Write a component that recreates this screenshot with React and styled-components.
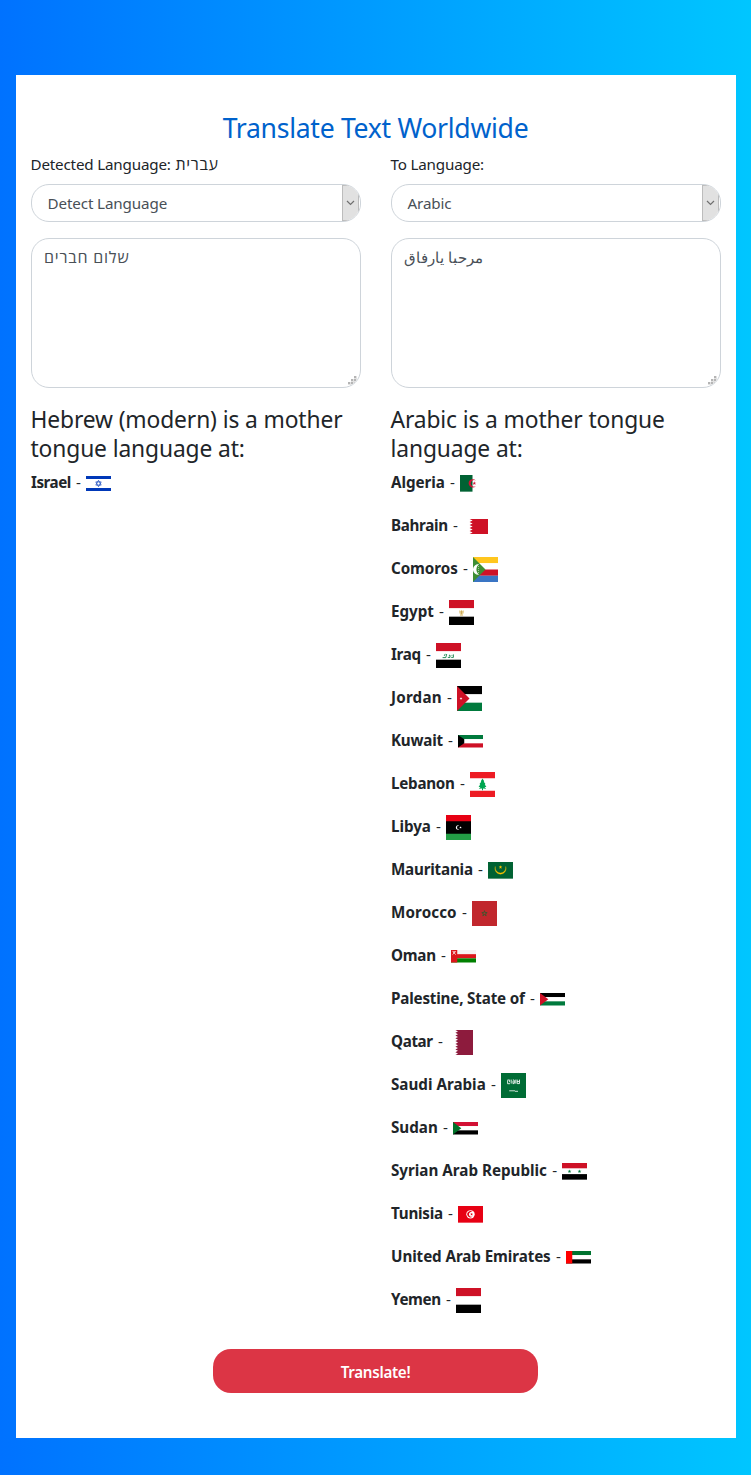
import React from 'react';
import styled, { createGlobalStyle } from 'styled-components';

const GlobalStyle = createGlobalStyle`
  *, *::before, *::after { box-sizing: border-box; }
  body {
    margin: 0;
    font-family: "Noto Sans", "Open Sans", sans-serif;
    font-size: 15.2px;
    line-height: 24px;
    letter-spacing: -0.18px;
    color: #212529;
    background: #0072ff;
  }
`;

const Page = styled.div`
  min-height: 1475px;
  padding: 75px 15px 37px 16px;
  background: linear-gradient(to right, #0072ff, #00c6ff);
`;

const Card = styled.main`
  height: 1363px;
  padding: 36px 15px 0;
  display: flex;
  flex-direction: column;
  background: #fff;
`;

const Title = styled.h1`
  margin: 0 1px 7px 0;
  font-size: 26.6px;
  font-weight: 400;
  line-height: 34px;
  letter-spacing: -0.3px;
  text-align: center;
  color: #0062cc;
`;

const Columns = styled.div`
  display: grid;
  grid-template-columns: 330px 330px;
  column-gap: 30px;
`;

const Column = styled.section`
  display: flex;
  flex-direction: column;
`;

const Label = styled.label`
  height: 24px;
  margin: 0 0 8px -0.5px;
  white-space: nowrap;
`;

const Hebrew = styled.span`
  margin-left: 1px;
  font-family: "Open Sans", sans-serif;
  font-size: 16px;
  letter-spacing: 0.7px;
`;

const SelectBox = styled.div`
  height: 38px;
  margin-bottom: 16px;
  padding-right: 1px;
  display: flex;
  border: 1px solid #ced4da;
  border-radius: 18px;
  overflow: hidden;
  color: #495057;
`;

const SelectValue = styled.span`
  flex: 1;
  padding: 6px 16px 6px 15.5px;
  letter-spacing: -0.12px;
`;

const SelectArrow = styled.span`
  width: 17px;
  display: flex;
  align-items: center;
  justify-content: center;
  background: #e1e1e1;
  border: 1px solid #bcbcbc;
`;

const TextBox = styled.div`
  position: relative;
  height: 150px;
  margin-bottom: 17px;
  padding: 6px 12px;
  border: 1px solid #ced4da;
  border-radius: 18px;
  overflow: hidden;
  color: #495057;
  letter-spacing: ${(p) => p.$track}px;
  font-family: "Open Sans", sans-serif;
  font-size: ${(p) => p.$size}px;
`;

const Grip = styled.svg`
  position: absolute;
  right: 3px;
  bottom: 2px;
`;

const Heading = styled.h2`
  margin: 0 0 8px -0.5px;
  font-size: 22.8px;
  font-weight: 400;
  line-height: 29px;
  letter-spacing: -0.12px;
`;

const CountryList = styled.ul`
  list-style: none;
  margin: 0;
  padding: 0;
  display: flex;
  flex-direction: column;
  gap: 18px;
`;

const CountryRow = styled.li`
  height: 25px;
  display: flex;
  align-items: center;
  white-space: nowrap;
`;

const CountryName = styled.b`
  padding-bottom: 2px;
  font-weight: 700;
  line-height: 23px;
  letter-spacing: ${(p) => p.$track}px;
`;

const Dash = styled.span`
  width: 15.2px;
  padding-bottom: 3px;
  line-height: 22px;
  text-align: center;
`;

const FlagArt = styled.svg`
  display: block;
`;

const Submit = styled.button`
  align-self: center;
  width: 325px;
  height: 44px;
  margin: 36px 1px 0 0;
  padding: 2px 0 0;
  border: 0;
  border-radius: 18px;
  background: #dc3545;
  color: #fff;
  font: 600 15.2px/24px "Noto Sans", sans-serif;
  letter-spacing: -0.3px;
`;

const Bands = ({ colors, h }) =>
  colors.map((c, i) => (
    <rect key={i} y={(h / colors.length) * i} width="25" height={h / colors.length} fill={c} />
  ));

const saw = (x0, x1, h, teeth) => {
  const step = h / teeth;
  let d = `M25 0H${x0}`;
  for (let i = 0; i < teeth; i++) d += `L${x1} ${step * (i + 0.5)}L${x0} ${step * (i + 1)}`;
  return d + 'H25Z';
};

const STAR = 'M0-1 .23-.31H.95L.36.12.59.81 0 .38-.59.81-.36.12-.95-.31H-.23Z';
const Star = ({ x, y, r, fill }) => <path d={STAR} fill={fill} transform={`translate(${x} ${y}) scale(${r})`} />;

const R = '#ce1126';
const W = '#fff';
const K = '#000';
const G = '#007a3d';

const FLAGS = {
  il: [15, <>
    <path d="M0 0H25V3H0ZM0 12H25V15H0Z" fill="#0038b8" />
    <path d="M12.5 4.3 15.2 9.1H9.8ZM12.5 10.7 9.8 5.9H15.2Z" fill="none" stroke="#0038b8" strokeWidth=".65" />
  </>],
  dz: [16.67, <>
    <rect width="12.5" height="16.67" fill="#006233" />
    <path d="M15.8 5.4a4.2 4.2 0 1 0 0 5.9a3.4 3.4 0 1 1 0-5.9Z" fill="#d21034" />
    <Star x={14.3} y={8.33} r={2.1} fill="#d21034" />
  </>],
  bh: [15, <path d={saw(6.6, 9.6, 15, 5)} fill={R} />],
  km: [25, <>
    <Bands h={25} colors={['#ffc61e', W, R, '#3a75c4']} />
    <path d="M0 0 12.5 12.5 0 25Z" fill="#3d8e33" />
    <path d="M6.2 7.4a5.2 5.2 0 1 0 0 10.2a5.25 5.25 0 0 1 0-10.2Z" fill={W} />
    <path d="M6 7.6C.2 7.6 .2 17.4 6 17.4C2.6 15.6 2.6 9.4 6 7.6Z" fill={W} />
    <path d="M5.4 9v7" stroke={W} strokeWidth=".7" strokeDasharray="1 1" opacity=".8" />
  </>],
  eg: [25, <>
    <Bands h={25} colors={[R, W, K]} />
    <path d="M10 10.2 11.5 11 12.5 9.8 13.5 11 15 10.2 14.6 13.6 13.5 13.7 14.2 15.7H10.8L11.5 13.7 10.4 13.6Z" fill="#e3cb8c" />
    <path d="M12.5 11v3" stroke="#c09b48" strokeWidth=".7" />
  </>],
  iq: [25, <>
    <Bands h={25} colors={[R, W, K]} />
    <path d="M6.6 14.6H9.8L10.7 11M8.2 12.9 9.3 10.9M11.8 14.4H14V12.2L12.9 12.4M15.2 14.4H17.4V11.4M15.6 12.4H16.4" fill="none" stroke={G} strokeWidth=".85" />
  </>],
  jo: [25, <>
    <Bands h={25} colors={[K, W, G]} />
    <path d="M0 0 12.5 12.5 0 25Z" fill={R} />
    <Star x={4} y={12.5} r={1.5} fill={W} />
  </>],
  kw: [12.5, <>
    <Bands h={12.5} colors={[G, W, R]} />
    <path d="M0 0 6.25 4.17V8.33L0 12.5Z" fill={K} />
  </>],
  lb: [25, <>
    <path d="M0 0H25V6.25H0ZM0 18.75H25V25H0Z" fill="#ed1c24" />
    <path d="M12.5 6.6 14.2 9.3 13.8 9.8 15.5 12 14.8 12.5 16.4 15 14.5 15.1 16.2 16.8 13 16.5V18.3H12V16.5L8.8 16.8 10.5 15.1 8.6 15 10.2 12.5 9.5 12 11.2 9.8 10.8 9.3Z" fill="#00a651" />
  </>],
  ly: [25, <>
    <rect width="25" height="25" fill={K} />
    <rect width="25" height="6.25" fill="#e70013" />
    <rect y="18.75" width="25" height="6.25" fill="#239e46" />
    <path d="M13.3 10.2a2.5 2.5 0 1 0 0 4.6a2.1 2.1 0 1 1 0-4.6Z" fill={W} />
    <Star x={14.5} y={12.5} r={1.3} fill={W} />
  </>],
  mr: [16.67, <>
    <rect width="25" height="16.67" fill="#006233" />
    <path d="M7.3 4.5A5.6 5.6 0 1 0 17.7 4.5A5.33 5.33 0 1 1 7.3 4.5Z" fill="#ffc400" stroke="#ffc400" strokeWidth=".3" />
    <Star x={12.5} y={5.2} r={1.9} fill="#ffc400" />
  </>],
  ma: [25, <>
    <rect width="25" height="25" fill="#c1272d" />
    <path d={STAR} transform="translate(12.5 12.5) scale(2.8)" fill="none" stroke="#2f5a2c" strokeWidth=".3" />
  </>],
  om: [12.5, <>
    <Bands h={12.5} colors={['#f6f3f3', '#db161b', '#008000']} />
    <rect width="6.25" height="12.5" fill="#db161b" />
    <path d="M1.5 1.4 4.8 4.6M4.8 1.4 1.5 4.6M2.2 1.7H4.2" stroke={W} strokeWidth=".75" />
  </>],
  ps: [12.5, <>
    <Bands h={12.5} colors={[K, W, G]} />
    <path d="M0 0 8.3 6.25 0 12.5Z" fill={R} />
  </>],
  qa: [25, <path d={saw(7.4, 10, 25, 9)} fill="#8d1b3d" />],
  sa: [25, <>
    <rect width="25" height="25" fill="#006c35" />
    <path d="M6.6 7.3V10.7H9M8.6 6.6V9.2M10.2 6.6V10.6M11.8 7H13.2V10.6H11.6M14.8 6.6V10.6M16.2 6.6V10.6H18.5V6.6M6.5 7H8M11 9H14M16 8.4H18" fill="none" stroke={W} strokeWidth=".95" opacity=".9" />
    <path d="M8.2 17.8H14M14 18.3H17" stroke={W} strokeWidth=".8" />
  </>],
  sd: [12.5, <>
    <Bands h={12.5} colors={['#d21034', W, K]} />
    <path d="M0 0 8.3 6.25 0 12.5Z" fill="#007229" />
  </>],
  sy: [16.67, <>
    <Bands h={16.67} colors={[R, W, K]} />
    <Star x={7.5} y={8.4} r={2} fill={G} />
    <Star x={17.5} y={8.4} r={2} fill={G} />
  </>],
  tn: [16.67, <>
    <rect width="25" height="16.67" fill="#e70013" />
    <circle cx="12.5" cy="8.33" r="4.2" fill={W} />
    <path d="M14.6 6.1a3.1 3.1 0 1 0 0 4.4a2.5 2.5 0 1 1 0-4.4Z" fill="#e70013" />
    <Star x={13.6} y={8.33} r={1.6} fill="#e70013" />
  </>],
  ae: [12.5, <>
    <Bands h={12.5} colors={['#00732f', W, K]} />
    <rect width="6.25" height="12.5" fill="#f00" />
  </>],
  ye: [25, <Bands h={25} colors={[R, W, K]} />],
};

const Flag = ({ code }) => {
  const [h, art] = FLAGS[code];
  return (
    <FlagArt width="25" height={h} viewBox={`0 0 25 ${h}`} aria-hidden="true">
      {art}
    </FlagArt>
  );
};

const HEBREW_COUNTRIES = [['Israel', 'il', -0.49]];

const ARABIC_COUNTRIES = [
  ['Algeria', 'dz', -0.05],
  ['Bahrain', 'bh', -0.33],
  ['Comoros', 'km', -0.06],
  ['Egypt', 'eg', -0.05],
  ['Iraq', 'iq', -0.35],
  ['Jordan', 'jo', 0.2],
  ['Kuwait', 'kw', -0.23],
  ['Lebanon', 'lb', -0.25],
  ['Libya', 'ly', -0.06],
  ['Mauritania', 'mr', -0.2],
  ['Morocco', 'ma', 0.11],
  ['Oman', 'om', -0.25],
  ['Palestine, State of', 'ps', -0.18],
  ['Qatar', 'qa', -0.36],
  ['Saudi Arabia', 'sa', 0],
  ['Sudan', 'sd', 0],
  ['Syrian Arab Republic', 'sy', 0],
  ['Tunisia', 'tn', -0.25],
  ['United Arab Emirates', 'ae', -0.09],
  ['Yemen', 'ye', -0.36],
];

const Countries = ({ items }) => (
  <CountryList>
    {items.map(([name, code, track]) => (
      <CountryRow key={code}>
        <CountryName $track={track}>{name}</CountryName>
        <Dash>-</Dash>
        <Flag code={code} />
      </CountryRow>
    ))}
  </CountryList>
);

const Select = ({ value }) => (
  <SelectBox role="combobox">
    <SelectValue>{value}</SelectValue>
    <SelectArrow>
      <svg width="9" height="6" viewBox="0 0 9 6" fill="none" stroke="#707070" strokeWidth="1.2">
        <path d="M1 1 4.5 4.5 8 1" />
      </svg>
    </SelectArrow>
  </SelectBox>
);

const TextArea = ({ children, size, track }) => (
  <TextBox $size={size} $track={track}>
    {children}
    <Grip width="9" height="9" viewBox="0 0 9 9" fill="#b4b4b4">
      <path d="M3 3h6v6h-6zM6 0h3v3h-3zM0 6h3v3h-3z" fill="#e2e2e2" />
      <path d="M6 0h2v2h-2zM3 3h2v2h-2zM6 3h2v2h-2zM0 6h2v2h-2zM3 6h2v2h-2zM6 6h2v2h-2z" />
    </Grip>
  </TextBox>
);

export default function App() {
  return (
    <>
      <GlobalStyle />
      <Page>
        <Card>
          <Title>Translate Text Worldwide</Title>
          <Columns>
            <Column>
              <Label>
                Detected Language: <Hebrew>עברית</Hebrew>
              </Label>
              <Select value="Detect Language" />
              <TextArea size={16} track={0.8}>שלום חברים</TextArea>
              <Heading>Hebrew (modern) is a mother tongue language at:</Heading>
              <Countries items={HEBREW_COUNTRIES} />
            </Column>
            <Column>
              <Label>To Language:</Label>
              <Select value="Arabic" />
              <TextArea size={14.6} track={0}>مرحبا يارفاق</TextArea>
              <Heading>Arabic is a mother tongue language at:</Heading>
              <Countries items={ARABIC_COUNTRIES} />
            </Column>
          </Columns>
          <Submit type="button">Translate!</Submit>
        </Card>
      </Page>
    </>
  );
}
